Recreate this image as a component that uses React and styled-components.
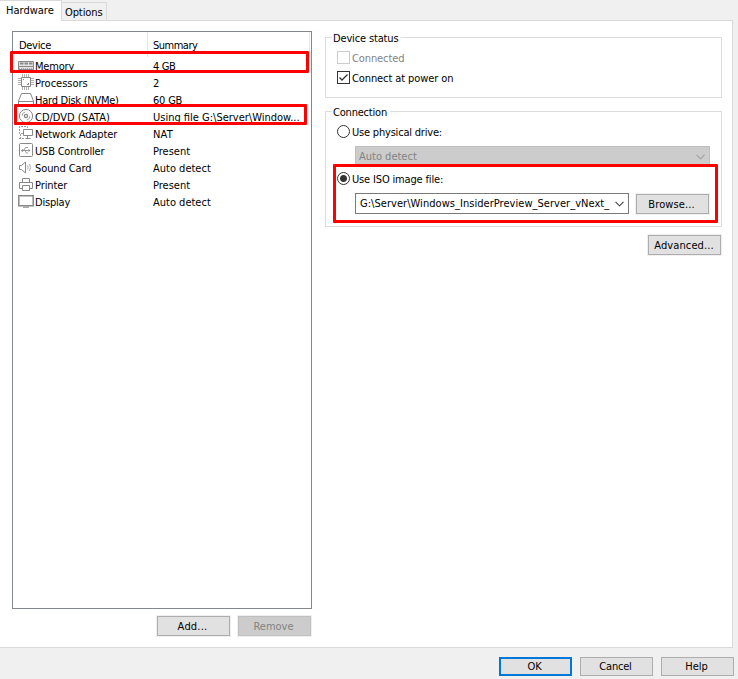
import React from "react";
import styled, { createGlobalStyle } from "styled-components";

const Global = createGlobalStyle`
  * { box-sizing: border-box; }
  body { margin: 0; background: #f0f0f0; overflow: hidden; }
  button { font: inherit; letter-spacing: inherit; }
`;

const Dialog = styled.div`
  width: 738px;
  height: 679px;
  display: flex;
  flex-direction: column;
  position: relative;
  background: #f0f0f0;
  color: #000;
  font: 11px/17px "DejaVu Sans Condensed", "DejaVu Sans", sans-serif;
  font-stretch: condensed;
`;

const Text = styled.span`
  white-space: pre;
  letter-spacing: ${(p) => p.$ls || 0}px;
`;

const Tabs = styled.div`
  display: flex;
  align-items: flex-end;
  height: 20px;
  z-index: 1;
`;

const Tab = styled.div`
  height: ${(p) => (p.$active ? 21 : 18)}px;
  width: ${(p) => (p.$active ? 62 : 45)}px;
  padding: ${(p) => (p.$active ? "1px 0 0 6px" : "1px 0 0 3px")};
  background: ${(p) => (p.$active ? "#fff" : "#f0f0f0")};
  border: 1px solid #d9d9d9;
  border-width: 1px 1px 0 0;
  margin-bottom: ${(p) => (p.$active ? -1 : 0)}px;
`;

const Page = styled.div`
  width: 733px;
  height: 628px;
  background: #fff;
  border: 1px solid #d9d9d9;
  border-left: 0;
  padding: 10px 0 0 12px;
  display: grid;
  grid-template-columns: 300px 397px;
  column-gap: 13px;
`;

const DeviceColumn = styled.div`
  display: flex;
  flex-direction: column;
`;

const DeviceList = styled.div`
  height: 578px;
  border: 1px solid #828790;
  background: #fff;
`;

const Header = styled.div`
  display: grid;
  grid-template-columns: 135px 162px;
  height: 26px;
  & > span {
    height: 25px;
    border-right: 1px solid #e5e5e5;
    padding: 5px 0 0 6px;
  }
  & > span + span { padding-left: 5px; }
`;

const Row = styled.div`
  height: 17px;
  display: grid;
  grid-template-columns: 16px 117px 1fr;
  padding-left: 5px;
  padding-right: 8px;
  column-gap: 1px;
  svg { margin-top: -1px; display: block; }
`;

const ButtonRow = styled.div`
  display: flex;
  justify-content: flex-end;
  gap: 8px;
  padding: 7px 1px 0 0;
`;

const Button = styled.button`
  width: 73px;
  height: ${(p) => p.$h || 20}px;
  padding: 0 ${(p) => (p.$wide ? 1 : 2)}px 0 0;
  line-height: 15px;
  text-align: center;
  letter-spacing: ${(p) => p.$ls || 0}px;
  color: ${(p) => (p.disabled ? "#838383" : "#000")};
  background: ${(p) => (p.disabled ? "#ccc" : "#e1e1e1")};
  border: ${(p) => (p.$primary ? "2px solid #0078d7" : p.disabled ? "1px solid #bfbfbf" : "1px solid #adadad")};
  box-shadow: ${(p) => (p.$h ? "none" : "0 0 0 1px #f0f0f0")};
`;

const Settings = styled.div`
  display: flex;
  flex-direction: column;
  padding-top: 6px;
`;

const Group = styled.section`
  height: ${(p) => p.$h}px;
  border: 1px solid #dcdcdc;
  margin-bottom: ${(p) => p.$gap}px;
`;

const Legend = styled.div`
  width: max-content;
  height: 17px;
  margin: -8px 0 0 6px;
  padding: 0 3px 0 1px;
  background: #fff;
`;

const Option = styled.label`
  display: flex;
  align-items: center;
  height: 13px;
  gap: 2px;
  margin: ${(p) => p.$top}px 0 0 11px;
  color: ${(p) => (p.$muted ? "#838383" : "#000")};
  & > span:last-child { padding-top: 2px; }
`;

const Box = styled.span`
  width: 13px;
  height: 13px;
  border: 1px solid ${(p) => (p.$muted ? "#ccc" : "#333")};
  background: #fff;
  svg { display: block; }
`;

const Radio = styled.span`
  width: 13px;
  height: 13px;
  border: 1px solid #333;
  border-radius: 50%;
  background: ${(p) => (p.$on ? "radial-gradient(circle, #333 3px, #fff 4px)" : "#fff")};
`;

const Combo = styled.div`
  height: 21px;
  width: ${(p) => p.$w}px;
  display: flex;
  justify-content: space-between;
  align-items: center;
  padding: 0 4px 0 ${(p) => (p.$muted ? 3 : 4)}px;
  color: ${(p) => (p.$muted ? "#838383" : "#000")};
  background: ${(p) => (p.$muted ? "#ccc" : "#fff")};
  border: 1px solid ${(p) => (p.$muted ? "#bfbfbf" : "#7a7a7a")};
`;

const ComboRow = styled.div`
  display: flex;
  align-items: flex-start;
  gap: 7px;
  margin: ${(p) => p.$top}px 0 0 29px;
  button { margin-top: 1px; }
`;

const Advanced = styled.div`
  display: flex;
  justify-content: flex-end;
  padding-right: 1px;
`;

const Footer = styled.div`
  display: flex;
  justify-content: flex-end;
  gap: 8px;
  padding: 9px 4px 0 0;
`;

const Highlight = styled.div`
  position: absolute;
  left: ${(p) => p.$x}px;
  top: ${(p) => p.$y}px;
  width: ${(p) => p.$w}px;
  height: ${(p) => p.$h}px;
  border: 3px solid #f00;
  border-radius: 1px;
  pointer-events: none;
  z-index: 2;
`;

const Icon = ({ children }) => (
  <svg width="16" height="16" viewBox="0 0 16 16" fill="none" stroke="#888" strokeWidth="1">
    {children}
  </svg>
);

const Chevron = ({ color }) => (
  <svg width="9" height="6" viewBox="0 0 9 6" fill="none" stroke={color} strokeWidth="1.1">
    <path d="M.5 .8 4.5 4.8 8.5 .8" />
  </svg>
);

const icons = {
  memory: (
    <Icon>
      <path d="M.5 4.5h15v8H.5z" fill="#e4e4e4" />
      <path d="M2 6.5h3.5M6.5 6.5H10M11 6.5h3.500" strokeWidth="2" />
      <path d="M1 9.5h14" />
      <path d="M1 11.5h14" stroke="#aaa" strokeDasharray="1 1" />
    </Icon>
  ),
  cpu: (
    <Icon>
      <path d="M3.500 3.500h9v9h-9z" />
      <path d="M4.500 0v3M6.500 0v3M8.500 0v3M10.500 0v3M4.500 13v3M6.500 13v3M8.500 13v3M10.500 13v3M0 4.500h3M0 6.500h3M0 8.500h3M0 10.500h3M13 4.500h3M13 6.500h3M13 8.500h3M13 10.500h3" stroke="#b0b0b0" />
      <path d="M5 5.500h1M9 10.500h2M10.500 9v2" />
    </Icon>
  ),
  disk: (
    <Icon>
      <path d="M3.500 2.500h9l3 7.500v4.500H.5V10zM.5 10.500h15" />
    </Icon>
  ),
  cd: (
    <Icon>
      <circle cx="8" cy="8" r="6.600" />
      <circle cx="8" cy="8" r="1.600" strokeWidth="1.300" />
      <path d="M4 8a4 4 0 0 1 3.400-4M12 8a4 4 0 0 1-3.400 4" stroke="#aaa" />
    </Icon>
  ),
  network: (
    <Icon>
      <path d="M5 8.500H1.500v-7h8V4" stroke="#999" strokeDasharray="2 1" />
      <path d="M2.500 9v4M1 13.500h5" stroke="#999" strokeDasharray="2 1" />
      <path d="M5.500 5.500V4.500h9v6h-9zM9.500 10.500v3M7.500 13.500h5" />
    </Icon>
  ),
  usb: (
    <Icon>
      <rect x="1.500" y="1.500" width="13" height="13" rx="1" />
      <path d="M4 8.500h8M6 8l1.500-2.500H10M7 8.500 8.500 11H10" stroke="#999" />
      <circle cx="4.500" cy="8.500" r=".8" fill="#888" />
      <path d="M10.500 7v3l2-1.500z" fill="#888" stroke="none" />
    </Icon>
  ),
  sound: (
    <Icon>
      <path d="M1.500 6.500h2L7.500 3v11l-4-3.500h-2z" />
      <path d="M9.500 6.500q1.200 2 0 4M11.500 5q2.200 3.500 0 7" stroke="#aaa" />
    </Icon>
  ),
  printer: (
    <Icon>
      <path d="M4.500 6.500v-4h7v4M4 12.500H1.500v-6h13v6H12" />
      <path d="M4.500 9.500h7v5h-7z" />
    </Icon>
  ),
  display: (
    <Icon>
      <path d="M.8 2.700h14.400v10H.8z" strokeWidth="1.500" />
      <path d="M5 14.200h6" stroke="#999" strokeWidth="1.300" />
    </Icon>
  ),
};

const devices = [
  ["memory", "Memory", "4 GB", -0.2, -0.4],
  ["cpu", "Processors", "2", 0, 0],
  ["disk", "Hard Disk (NVMe)", "60 GB", -0.25, -0.2],
  ["cd", "CD/DVD (SATA)", "Using file G:\\Server\\Window...", 0, 0],
  ["network", "Network Adapter", "NAT", -0.1, 0.2],
  ["usb", "USB Controller", "Present", -0.2, 0],
  ["sound", "Sound Card", "Auto detect", -0.1, 0],
  ["printer", "Printer", "Present", -0.1, 0],
  ["display", "Display", "Auto detect", -0.2, 0],
];

export default function App() {
  return (
    <>
      <Global />
      <Dialog>
        <Tabs>
          <Tab $active><Text>Hardware</Text></Tab>
          <Tab><Text $ls={-0.1}>Options</Text></Tab>
        </Tabs>
        <Page>
          <DeviceColumn>
            <DeviceList>
              <Header><Text $ls={-0.3}>Device</Text><Text $ls={-0.5}>Summary</Text></Header>
              {devices.map(([icon, name, summary, nameLs, summaryLs]) => (
                <Row key={name}>
                  {icons[icon]}
                  <Text $ls={nameLs}>{name}</Text>
                  <Text $ls={summaryLs}>{summary}</Text>
                </Row>
              ))}
            </DeviceList>
            <ButtonRow>
              <Button $ls={0.2}>Add...</Button>
              <Button disabled>Remove</Button>
            </ButtonRow>
          </DeviceColumn>
          <Settings>
            <Group $h={61} $gap={13}>
              <Legend><Text $ls={-0.15}>Device status</Text></Legend>
              <Option $top={4} $muted><Box $muted /><Text $ls={-0.1}>Connected</Text></Option>
              <Option $top={7}>
                <Box>
                  <svg width="11" height="11" viewBox="0 0 11 11" fill="none" stroke="#333" strokeWidth="1.3">
                    <path d="M1.500 5.500 4 8 9.500 2.500" />
                  </svg>
                </Box>
                <Text $ls={-0.1}>Connect at power on</Text>
              </Option>
            </Group>
            <Group $h={116} $gap={8}>
              <Legend><Text $ls={-0.2}>Connection</Text></Legend>
              <Option $top={4}><Radio /><Text $ls={-0.2}>Use physical drive:</Text></Option>
              <ComboRow $top={8}>
                <Combo $w={355} $muted><Text>Auto detect</Text><Chevron color="#a0a0a0" /></Combo>
              </ComboRow>
              <Option $top={5}><Radio $on /><Text $ls={-0.16}>Use ISO image file:</Text></Option>
              <ComboRow $top={8}>
                <Combo $w={274}><Text $ls={0.04}>G:\Server\Windows_InsiderPreview_Server_vNext_</Text><Chevron color="#444" /></Combo>
                <Button $ls={0.1}>Browse...</Button>
              </ComboRow>
            </Group>
            <Advanced><Button $wide $ls={0.1}>Advanced...</Button></Advanced>
          </Settings>
        </Page>
        <Footer>
          <Button $h={19} $primary $ls={-0.2}>OK</Button>
          <Button $h={19} $ls={-0.2}>Cancel</Button>
          <Button $h={19}>Help</Button>
        </Footer>
        <Highlight $x={10} $y={51} $w={299} $h={22} />
        <Highlight $x={14} $y={104} $w={293} $h={21} />
        <Highlight $x={333} $y={164} $w={385} $h={59} />
      </Dialog>
    </>
  );
}
